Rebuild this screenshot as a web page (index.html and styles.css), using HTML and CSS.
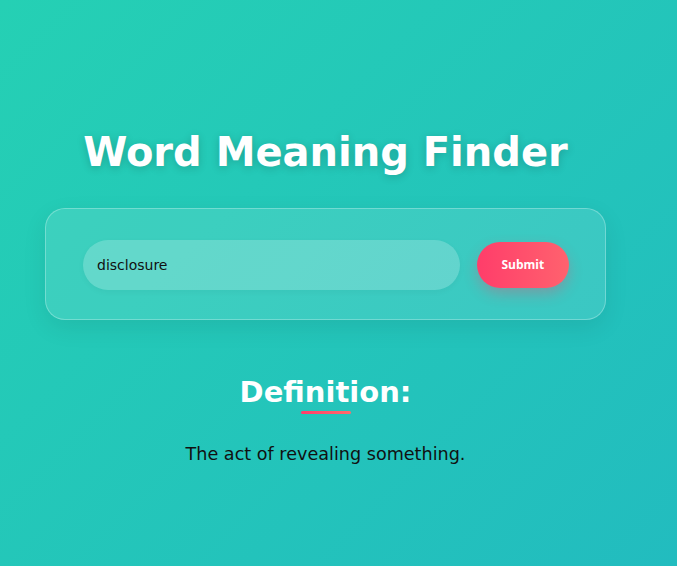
FILE: index.html
```html
<!DOCTYPE html>
<html lang="en">
<head>
<meta charset="utf-8">
<title>Word Meaning Finder</title>
<link rel="stylesheet" href="styles.css">
</head>
<body>
<main class="app">
  <h1 class="title">Word Meaning Finder</h1>
  <form class="card">
    <input class="word-input" type="text" value="disclosure">
    <button class="submit" type="button">Submit</button>
  </form>
  <section class="result">
    <h2 class="result-title">Definition:</h2>
    <div class="underline"></div>
    <p class="definition">The act of revealing something.</p>
  </section>
</main>
</body>
</html>
```
FILE: styles.css
```css
html, body {
  margin: 0;
  padding: 0;
  height: 100%;
}
body {
  background: linear-gradient(135deg, #25d0b4 0%, #22bcbf 100%);
  font-family: "DejaVu Sans", sans-serif;
  min-height: 566px;
}
.app {
  width: 561px;
  margin-left: 45px;
  padding-top: 126px;
  display: flex;
  flex-direction: column;
  align-items: center;
}
.title {
  margin: 0;
  font-size: 40px;
  font-weight: bold;
  color: #fff;
  text-shadow: 0 2px 8px rgba(0, 0, 0, 0.18);
  line-height: 52px;
}
.card {
  box-sizing: border-box;
  width: 561px;
  height: 112px;
  margin-top: 30px;
  padding: 31px 36px 30px 37px;
  display: flex;
  align-items: center;
  gap: 16px;
  background: rgba(255, 255, 255, 0.11);
  border: 1px solid rgba(255, 255, 255, 0.28);
  border-radius: 20px;
  box-shadow: 0 8px 24px rgba(0, 0, 0, 0.08);
}
.word-input {
  box-sizing: border-box;
  width: 379px;
  height: 50px;
  border: none;
  outline: none;
  border-radius: 25px;
  padding: 0 14px;
  background: rgba(255, 255, 255, 0.2);
  box-shadow: 0 2px 6px rgba(0, 0, 0, 0.04);
  font-family: "DejaVu Sans", sans-serif;
  font-size: 14px;
  color: #111;
}
.submit {
  width: 93px;
  height: 46px;
  margin-left: 1px;
  border: none;
  border-radius: 23px;
  background: linear-gradient(90deg, #ff3d6a 0%, #ff626e 100%);
  color: #fff;
  font-family: "Open Sans", sans-serif;
  font-weight: bold;
  font-size: 12px;
  box-shadow: 0 6px 14px rgba(255, 60, 100, 0.3);
  cursor: pointer;
}
.result {
  display: flex;
  flex-direction: column;
  align-items: center;
  margin-top: 54px;
}
.result-title {
  margin: 0;
  font-size: 29px;
  font-weight: bold;
  color: #fff;
  line-height: 36px;
}
.underline {
  width: 50px;
  height: 3px;
  margin-top: 1px;
  border-radius: 2px;
  background: linear-gradient(90deg, #ff3d6a, #ff6b6b);
}
.definition {
  margin: 30px 0 0;
  font-size: 17.6px;
  color: #111;
}
```
